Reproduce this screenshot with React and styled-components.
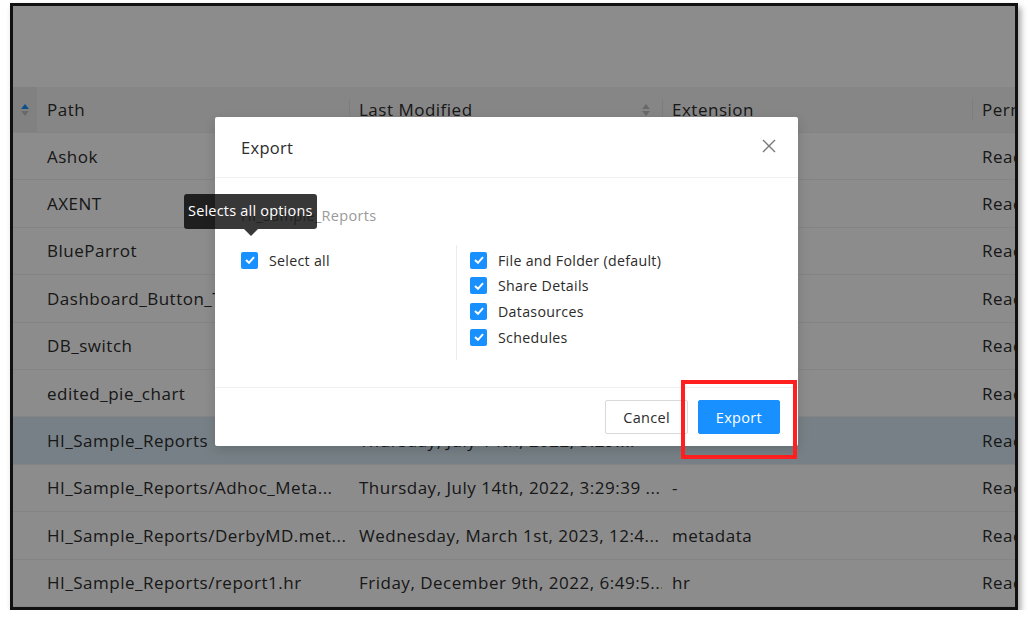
import React from "react";
import styled, { createGlobalStyle } from "styled-components";

const GlobalStyle = createGlobalStyle`
  html, body {
    margin: 0;
    padding: 0;
    background: #ffffff;
    font-family: "Open Sans", "Liberation Sans", sans-serif;
    letter-spacing: 0.45px;
  }
`;

// 화면 전체 틀 (스크린샷 테두리)
const Frame = styled.div`
  position: relative;
  box-sizing: border-box;
  width: 1008px;
  height: 607px;
  margin: 3px 0 0 10px;
  border: 3px solid #111;
  overflow: hidden;
  background: #fff;
  box-shadow: 3px 4px 6px rgba(0, 0, 0, 0.35);
`;

const TopSpace = styled.div`
  height: 81px;
`;

const Table = styled.div`
  display: flex;
  flex-direction: column;
`;

const Row = styled.div`
  display: grid;
  grid-template-columns: 24px 312px 313px 310px 1fr;
  height: ${(p) => (p.$header ? "46px" : "47.4px")};
  align-items: center;
  border-bottom: 1px solid #f0f0f0;
  box-sizing: border-box;
  background: ${(p) => (p.$header ? "#f5f5f5" : p.$selected ? "#d8eaf5" : "#fff")};
  color: #2c2c2c;
  font-size: 17px;
  letter-spacing: 0.5px;
`;

const SortCell = styled.div`
  height: 100%;
  display: flex;
  align-items: center;
  justify-content: center;
  background: ${(p) => (p.$header ? "#ececec" : "transparent")};
`;

const Cell = styled.div`
  position: relative;
  height: 100%;
  display: flex;
  align-items: center;
  justify-content: space-between;
  padding: 0 12px 0 10px;
  white-space: nowrap;
  overflow: hidden;

  &::before {
    content: "";
    display: ${(p) => (p.$divider ? "block" : "none")};
    position: absolute;
    left: 0;
    top: 12px;
    bottom: 12px;
    width: 1px;
    background: #e3e3e3;
  }
`;

const SortIcon = ({ up = "#bfbfbf", down = "#bfbfbf" }) => (
  <svg width="8" height="14" viewBox="0 0 8 14">
    <path d="M4 1 L8 6 L0 6 Z" fill={up} />
    <path d="M4 13 L8 8 L0 8 Z" fill={down} />
  </svg>
);

const Overlay = styled.div`
  position: absolute;
  inset: 0;
  background: rgba(0, 0, 0, 0.45);
`;

const Modal = styled.div`
  position: absolute;
  left: 202px;
  top: 111px;
  width: 583px;
  height: 329px;
  background: #fff;
  border-radius: 2px;
  display: flex;
  flex-direction: column;
  color: #2b2b2b;
  letter-spacing: 0.3px;
  box-shadow: 0 4px 12px rgba(0, 0, 0, 0.15);
`;

const ModalHeader = styled.div`
  height: 61px;
  box-sizing: border-box;
  display: flex;
  align-items: center;
  justify-content: space-between;
  padding: 0 22px 0 26px;
  border-bottom: 1px solid #f0f0f0;
  font-size: 16.5px;
`;

const CloseButton = styled.button`
  border: none;
  background: none;
  padding: 0;
  margin-top: -2px;
  display: flex;
  cursor: pointer;
`;

const ModalBody = styled.div`
  flex: 1;
  padding: 27px 26px 0 26px;
`;

const FolderName = styled.div`
  font-size: 14.5px;
  color: #9a9a9a;
  height: 22px;
  line-height: 22px;
`;

const Columns = styled.div`
  display: flex;
  margin-top: 18px;
`;

const LeftCol = styled.div`
  position: relative;
  width: 215px;
  padding-top: 4px;
  border-right: 1px solid #ececec;
  height: 111px;
`;

const RightCol = styled.div`
  display: flex;
  flex-direction: column;
  gap: 3.7px;
  padding-left: 13px;
  padding-top: 4px;
`;

const CheckRow = styled.label`
  display: flex;
  align-items: center;
  gap: 11px;
  font-size: 14.2px;
  height: 22px;
  color: #2b2b2b;
`;

const Box = styled.span`
  width: 17px;
  height: 17px;
  border-radius: 2px;
  background: #1890ff;
  display: flex;
  align-items: center;
  justify-content: center;
`;

const Check = () => (
  <Box>
    <svg width="10" height="8" viewBox="0 0 10 8">
      <path d="M1 4 L4 6.8 L9 1.2" stroke="#fff" strokeWidth="2" fill="none" />
    </svg>
  </Box>
);

const Tooltip = styled.div`
  position: absolute;
  left: -57px;
  top: -51px;
  background: rgba(0, 0, 0, 0.78);
  color: #fff;
  font-size: 14.5px;
  letter-spacing: 0.2px;
  padding: 0 4px;
  height: 35px;
  line-height: 33px;
  border-radius: 3px;
  white-space: nowrap;

  &::after {
    content: "";
    position: absolute;
    left: 60px;
    bottom: -7px;
    border-left: 7px solid transparent;
    border-right: 7px solid transparent;
    border-top: 7px solid rgba(0, 0, 0, 0.78);
  }
`;

const ModalFooter = styled.div`
  height: 59px;
  box-sizing: border-box;
  border-top: 1px solid #f0f0f0;
  display: flex;
  align-items: center;
  justify-content: flex-end;
  gap: 10px;
  padding: 0 18px 0 0;
`;

const Button = styled.button`
  height: 34px;
  padding: 0 17px;
  font-family: inherit;
  letter-spacing: inherit;
  font-size: 14.5px;
  border-radius: 2px;
  border: 1px solid ${(p) => (p.$primary ? "#1890ff" : "#d9d9d9")};
  background: ${(p) => (p.$primary ? "#1890ff" : "#fff")};
  color: ${(p) => (p.$primary ? "#fff" : "#2b2b2b")};
  cursor: pointer;
`;

const Highlight = styled.div`
  position: absolute;
  left: 668px;
  top: 374px;
  width: 116px;
  height: 79px;
  box-sizing: border-box;
  border: 4px solid #ff1f1f;
  pointer-events: none;
`;

const rows = [
  ["Ashok", "Monday, June 6th, 2022, 11:02:14 ...", "-", "Read"],
  ["AXENT", "Tuesday, May 2nd, 2023, 4:17:08 ...", "-", "Read"],
  ["BlueParrot", "Friday, April 14th, 2023, 9:45:21 ...", "-", "Read"],
  ["Dashboard_Button_Test", "Monday, March 6th, 2023, 2:11:...", "-", "Read"],
  ["DB_switch", "Thursday, March 9th, 2023, 5:33:...", "-", "Read"],
  ["edited_pie_chart", "Friday, March 3rd, 2023, 10:05:...", "-", "Read"],
  ["HI_Sample_Reports", "Thursday, July 14th, 2022, 3:29:...", "-", "Read", true],
  ["HI_Sample_Reports/Adhoc_Meta...", "Thursday, July 14th, 2022, 3:29:39 ...", "-", "Read"],
  ["HI_Sample_Reports/DerbyMD.met...", "Wednesday, March 1st, 2023, 12:4...", "metadata", "Read"],
  ["HI_Sample_Reports/report1.hr", "Friday, December 9th, 2022, 6:49:5...", "hr", "Read"],
];

const options = ["File and Folder (default)", "Share Details", "Datasources", "Schedules"];

export default function App() {
  return (
    <>
      <GlobalStyle />
      <Frame>
        <TopSpace />
        <Table>
          <Row $header>
            <SortCell $header>
              <SortIcon up="#1890ff" />
            </SortCell>
            <Cell>Path</Cell>
            <Cell $divider>
              Last Modified
              <SortIcon />
            </Cell>
            <Cell $divider>Extension</Cell>
            <Cell $divider>Permissions</Cell>
          </Row>
          {rows.map(([path, modified, ext, perm, selected]) => (
            <Row key={path} $selected={selected}>
              <SortCell />
              <Cell>{path}</Cell>
              <Cell>{modified}</Cell>
              <Cell>{ext}</Cell>
              <Cell>{perm}</Cell>
            </Row>
          ))}
        </Table>
        <Overlay />
        <Modal>
          <ModalHeader>
            Export
            <CloseButton aria-label="Close">
              <svg width="14" height="14" viewBox="0 0 14 14">
                <path d="M1 1 L13 13 M13 1 L1 13" stroke="#777" strokeWidth="1.4" />
              </svg>
            </CloseButton>
          </ModalHeader>
          <ModalBody>
            <FolderName>HI_Sample_Reports</FolderName>
            <Columns>
              <LeftCol>
                <CheckRow>
                  <Check />
                  Select all
                </CheckRow>
                <Tooltip>Selects all options</Tooltip>
              </LeftCol>
              <RightCol>
                {options.map((o) => (
                  <CheckRow key={o}>
                    <Check />
                    {o}
                  </CheckRow>
                ))}
              </RightCol>
            </Columns>
          </ModalBody>
          <ModalFooter>
            <Button>Cancel</Button>
            <Button $primary>Export</Button>
          </ModalFooter>
        </Modal>
        <Highlight />
      </Frame>
    </>
  );
}
